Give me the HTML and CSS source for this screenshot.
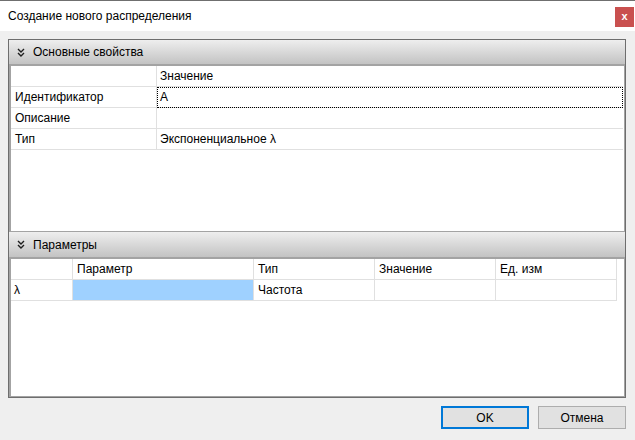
FILE: index.html
```html
<!DOCTYPE html>
<html lang="ru">
<head>
<meta charset="utf-8">
<title>Создание нового распределения</title>
<link rel="stylesheet" href="styles.css">
</head>
<body>
<div class="window">
  <div class="titlebar">
    <span class="title">Создание нового распределения</span>
    <div class="close">x</div>
  </div>
  <div class="main">
    <div class="panel">
      <div class="sec-head h1">
        <svg class="chev" width="8" height="9" viewBox="0 0 8 9"><path d="M1 1 L4 4 L7 1 M1 5 L4 8 L7 5" fill="none" stroke="#1e1e1e" stroke-width="1.4"/></svg>
        <span>Основные свойства</span>
      </div>
      <div class="sec-body b1">
        <div class="grid g1">
          <div class="c"></div><div class="c">Значение</div>
          <div class="c">Идентификатор</div><div class="c focus">A</div>
          <div class="c">Описание</div><div class="c"></div>
          <div class="c">Тип</div><div class="c">Экспоненциальное λ</div>
        </div>
      </div>
      <div class="sec-head h2">
        <svg class="chev" width="8" height="9" viewBox="0 0 8 9"><path d="M1 1 L4 4 L7 1 M1 5 L4 8 L7 5" fill="none" stroke="#1e1e1e" stroke-width="1.4"/></svg>
        <span>Параметры</span>
      </div>
      <div class="sec-body b2">
        <div class="grid g2">
          <div class="c"></div><div class="c">Параметр</div><div class="c">Тип</div><div class="c">Значение</div><div class="c">Ед. изм</div>
          <div class="c">λ</div><div class="c sel"></div><div class="c">Частота</div><div class="c"></div><div class="c"></div>
        </div>
      </div>
    </div>
  </div>
  <div class="buttons">
    <button class="btn ok">OK</button>
    <button class="btn">Отмена</button>
  </div>
</div>
</body>
</html>
```

FILE: styles.css
```css
* { box-sizing: border-box; }
html, body { margin: 0; padding: 0; }
body {
  width: 635px;
  height: 440px;
  overflow: hidden;
  background: #efefef;
  font-family: "Liberation Sans", Arial, sans-serif;
  font-size: 12px;
  color: #000;
}
.window { display: flex; flex-direction: column; height: 440px; }
.titlebar {
  height: 31px;
  border-top: 1px solid #6f6f6f;
  background: #fff;
  display: flex;
  align-items: center;
  padding-left: 8px;
}
.title { flex: 1; }
.close {
  align-self: flex-start;
  margin-top: 6px;
  margin-right: 1px;
  width: 19px;
  height: 20px;
  background: #c9504f;
  color: #fff;
  font-weight: bold;
  font-size: 11px;
  line-height: 18px;
  text-align: center;
}
.main { padding: 8px 9px 0 8px; }
.panel {
  height: 359px;
  border: 1px solid #6e6e6e;
  display: flex;
  flex-direction: column;
  background: #fff;
}
.sec-head {
  display: flex;
  align-items: center;
  padding-left: 8px;
  gap: 8px;
  background: linear-gradient(#eeeeee, #c3c3c3);
}
.h1 { height: 24px; }
.h2 { height: 25px; }
.chev { display: block; }
.sec-body {
  background: #fff;
  border-style: solid;
  border-color: #a3a3a3;
  border-width: 2px 1px 1px 2px;
}
.b1 { height: 168px; }
.b2 { height: 140px; }
.grid { display: grid; }
.g1 { grid-template-columns: 146px 466px; }
.g2 { grid-template-columns: 62px 181px 121px 121px 121px; }
.c {
  height: 21px;
  line-height: 20px;
  padding-left: 4px;
  border-bottom: 1px solid #e0e0e0;
  border-right: 1px solid #e0e0e0;
  white-space: nowrap;
  overflow: hidden;
}
.g1 .c:nth-child(2n) { border-right: none; padding-left: 3px; }
.g2 .c:nth-child(5n+1) { padding-left: 3px; }
.focus { outline: 1px dotted #000; outline-offset: -1px; }
.sel { background: #9fd1ff; }
.buttons {
  display: flex;
  justify-content: flex-end;
  gap: 9px;
  margin-top: 8px;
  padding-right: 9px;
}
.btn {
  width: 88px;
  height: 23px;
  background: #e1e1e1;
  border: 1px solid #adadad;
  font-family: "Liberation Sans", Arial, sans-serif;
  font-size: 12px;
  color: #000;
  padding: 0;
}
.btn.ok { border: 2px solid #0078d7; }
```
